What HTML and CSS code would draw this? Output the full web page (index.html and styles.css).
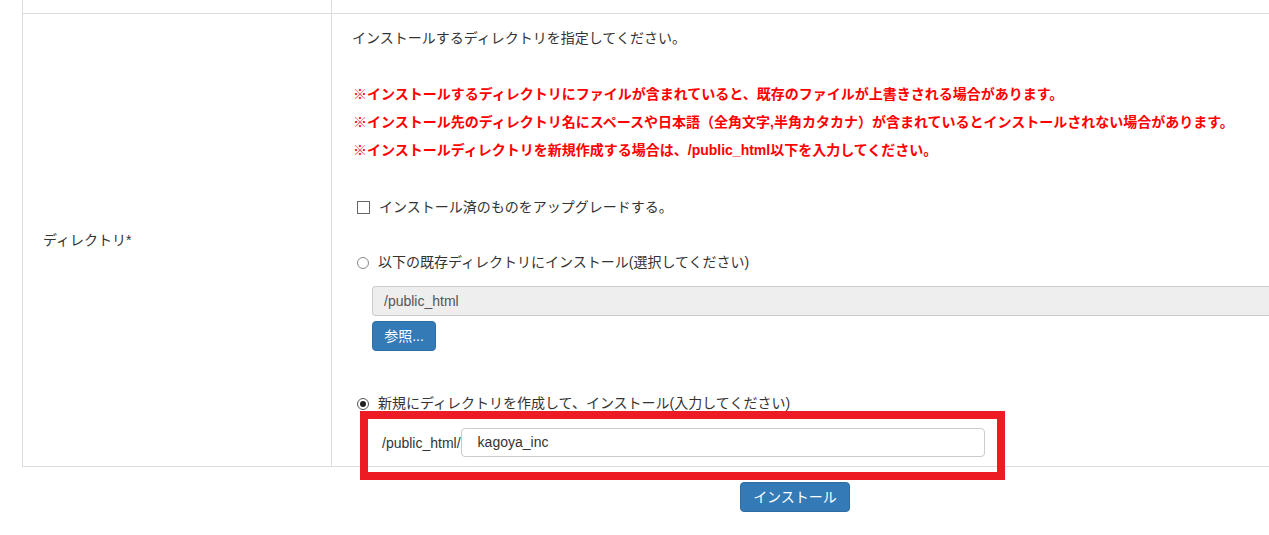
FILE: index.html
```html
<!DOCTYPE html>
<html lang="ja">
<head>
<meta charset="utf-8">
<link rel="stylesheet" href="styles.css">
</head>
<body>
<div class="page">
  <div class="table">
    <div class="row row-top">
      <div class="cell label"></div>
      <div class="cell value"></div>
    </div>
    <div class="row">
      <div class="cell label"><span>ディレクトリ*</span></div>
      <div class="cell value">
        <p class="intro">インストールするディレクトリを指定してください。</p>
        <div class="notes">
          <p>※インストールするディレクトリにファイルが含まれていると、既存のファイルが上書きされる場合があります。</p>
          <p>※インストール先のディレクトリ名にスペースや日本語（全角文字,半角カタカナ）が含まれているとインストールされない場合があります。</p>
          <p>※インストールディレクトリを新規作成する場合は、/public_html以下を入力してください。</p>
        </div>
        <div class="option opt-check"><span class="checkbox"></span><span>インストール済のものをアップグレードする。</span></div>
        <div class="option opt-radio1"><span class="radio"></span><span>以下の既存ディレクトリにインストール(選択してください)</span></div>
        <div class="indent">
          <div class="ro-input">/public_html</div>
          <button class="btn btn-ref">参照...</button>
        </div>
        <div class="option opt-radio2"><span class="radio checked"></span><span>新規にディレクトリを作成して、インストール(入力してください)</span></div>
        <div class="new-dir">
          <span class="prefix">/public_html/</span>
          <div class="text-input">kagoya_inc</div>
        </div>
      </div>
    </div>
  </div>
  <div class="actions">
    <button class="btn btn-install">インストール</button>
  </div>
  <div class="highlight"></div>
</div>
</body>
</html>
```

FILE: styles.css
```css
html, body {
  margin: 0;
  padding: 0;
  overflow: hidden;
  background: #fff;
}
body {
  font-family: "Liberation Sans", "Noto Sans CJK JP", sans-serif;
  font-size: 14px;
  color: #333;
  width: 1269px;
  height: 535px;
}
.page {
  position: relative;
  width: 1269px;
  height: 535px;
}
.table {
  margin-left: 22px;
  width: 1247px;
  box-sizing: border-box;
  border-left: 1px solid #ddd;
  border-bottom: 1px solid #ddd;
}
.row {
  display: grid;
  grid-template-columns: 309px 1fr;
}
.row + .row {
  border-top: 1px solid #ddd;
}
.row-top {
  height: 13px;
}
.cell {
  box-sizing: border-box;
  min-width: 0;
}
.label {
  border-right: 1px solid #ddd;
  padding-left: 20px;
  display: flex;
  align-items: center;
  line-height: 20px;
}
.value {
  padding: 14px 0 9px 20px;
}
p {
  margin: 0;
}
.intro {
  line-height: 20px;
}
.notes {
  margin-top: 32px;
  color: #f00;
  font-weight: bold;
  line-height: 28px;
  white-space: nowrap;
}
.notes p {
  padding-left: 1px;
}
.option {
  display: flex;
  align-items: center;
  height: 20px;
  line-height: 20px;
  padding-left: 5px;
  gap: 9px;
}
.opt-check { margin-top: 33px; }
.opt-radio1 { margin-top: 35px; }
.opt-radio2 { margin-top: 42px; }
.checkbox {
  width: 11px;
  height: 11px;
  border: 1px solid #666;
  background: #fff;
  flex: none;
}
.radio {
  width: 10px;
  height: 10px;
  border: 1px solid #888;
  border-radius: 50%;
  background: #fff;
  flex: none;
  position: relative;
  margin-top: 2px;
}
.radio.checked {
  border-color: #555;
}
.radio.checked::after {
  content: "";
  position: absolute;
  left: 2px;
  top: 2px;
  width: 6px;
  height: 6px;
  border-radius: 50%;
  background: #222;
}
.indent {
  padding-left: 20px;
  margin-top: 14px;
}
.ro-input {
  box-sizing: border-box;
  height: 30px;
  width: 897px;
  background: #eee;
  border: 1px solid #ccc;
  border-right: none;
  border-radius: 4px 0 0 4px;
  padding: 0 11px;
  line-height: 28px;
  color: #555;
}
.btn {
  font-family: "Liberation Sans", "Noto Sans CJK JP", sans-serif;
  font-size: 14px;
  color: #fff;
  background: #337ab7;
  border: 1px solid #2e6da4;
  border-radius: 4px;
  height: 30px;
  padding: 0 11px;
  line-height: 28px;
  margin: 0;
  display: block;
}
.btn-ref {
  margin-top: 5px;
  width: 64px;
}
.new-dir {
  margin-top: 15px;
  padding-left: 30px;
  display: flex;
  align-items: center;
  height: 29px;
}
.prefix {
  color: #333;
  line-height: 20px;
}
.text-input {
  box-sizing: border-box;
  width: 524px;
  height: 29px;
  border: 1px solid #ccc;
  border-radius: 4px;
  padding-left: 16px;
  line-height: 27px;
  color: #333;
  background: #fff;
}
.actions {
  margin-top: 15px;
  padding-left: 740px;
}
.btn-install {
  width: 110px;
  padding: 0;
  text-align: center;
}
.highlight {
  position: absolute;
  left: 360px;
  top: 411px;
  width: 645px;
  height: 69px;
  box-sizing: border-box;
  border: 8px solid #ed1c24;
  pointer-events: none;
}
```
